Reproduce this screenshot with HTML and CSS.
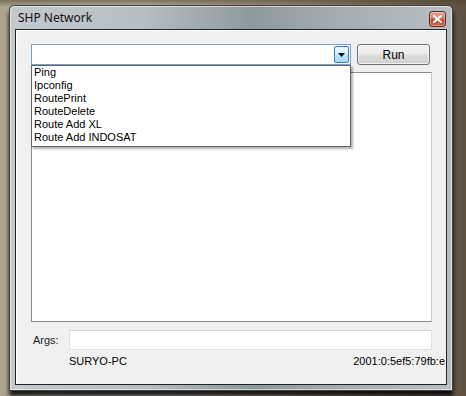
FILE: index.html
```html
<!DOCTYPE html>
<html lang="en">
<head>
    <meta charset="UTF-8">
    <title>SHP Network</title>
    <link rel="stylesheet" href="styles.css">
</head>
<body>
    <div class="window">
        <div class="titlebar">
            <span class="title">SHP Network</span>
            <div class="close-btn">
                <svg width="9" height="8" viewBox="0 0 9 8">
                    <path d="M1 1 L8 7 M8 1 L1 7" stroke="#fff" stroke-width="2.2" stroke-linecap="square"/>
                </svg>
            </div>
        </div>

        <div class="client">
            <div class="command-row">
                <div class="combo">
                    <div class="combo-text"></div>
                    <div class="combo-arrow">
                        <svg width="7" height="4" viewBox="0 0 7 4"><path d="M0 0 H7 L3.5 4 Z" fill="#000"/></svg>
                    </div>
                </div>
                <button class="btn">Run</button>
            </div>

            <div class="output"></div>

            <div class="args-row">
                <label class="args-label">Args:</label>
                <div class="args-input"></div>
            </div>

            <div class="status-row">
                <span>SURYO-PC</span>
                <span class="ip">2001:0:5ef5:79fb:e</span>
            </div>

            <ul class="dropdown">
                <li>Ping</li>
                <li>Ipconfig</li>
                <li>RoutePrint</li>
                <li>RouteDelete</li>
                <li>Route Add XL</li>
                <li>Route Add INDOSAT</li>
            </ul>
        </div>
    </div>
</body>
</html>
```

FILE: styles.css
```css
body {
    margin: 0;
    width: 466px;
    height: 396px;
    overflow: hidden;
    font-family: "Liberation Sans", Arial, sans-serif;
    font-size: 11px;
    color: #000;
    background:
        linear-gradient(180deg, rgba(80, 66, 48, 0.55) 0px, rgba(80, 66, 48, 0) 7px),
        linear-gradient(90deg, #aaa48d 0%, #b4af9a 30%, #978c76 60%, #74664f 85%, #5e5140 100%);
    padding-top: 5px;
    box-sizing: border-box;
}

.window {
    margin-left: 9px;
    width: 444px;
    height: 386px;
    box-sizing: border-box;
    border: 1px solid #3d4347;
    border-radius: 5px 5px 0 0;
    padding: 0 5px 5px 5px;
    display: flex;
    flex-direction: column;
    background: linear-gradient(90deg, #c3c9cc 0%, #b7bec2 30%, #8e989d 55%, #a6adb1 75%, #b9bfc2 100%);
    box-shadow: 0 5px 4px rgba(0, 0, 0, 0.85), inset 0 0 0 1px rgba(255, 255, 255, 0.55);
}

.titlebar {
    height: 23px;
    display: flex;
    align-items: center;
    justify-content: space-between;
    padding-left: 3px;
    margin-right: -5px;
    padding-right: 6px;
}

.title {
    font-family: "Noto Sans", "Open Sans", sans-serif;
    font-size: 12px;
    color: #111;
    margin-top: -1px;
}

.close-btn {
    width: 15px;
    height: 14px;
    margin-top: 2px;
    border: 1px solid #5b2d22;
    border-radius: 3px;
    background: linear-gradient(180deg, #e9a896 0%, #d77a63 45%, #c2432a 55%, #d4673f 100%);
    display: flex;
    align-items: center;
    justify-content: center;
    box-shadow: inset 0 0 0 1px rgba(255, 255, 255, 0.35);
}

.client {
    flex: 1;
    position: relative;
    background: #f0f0f0;
    border: 1px solid #1f2326;
    box-shadow: inset 1px 1px 0 #fff;
    padding: 14px 14px 0 15px;
    display: flex;
    flex-direction: column;
}

.command-row {
    display: flex;
    align-items: flex-start;
}

.combo {
    width: 320px;
    height: 21px;
    box-sizing: border-box;
    border: 1px solid #7d9ec0;
    background: #fff;
    display: flex;
    justify-content: flex-end;
    padding: 1px;
}

.combo-arrow {
    width: 15px;
    box-sizing: border-box;
    border: 1px solid #3c7fb1;
    border-radius: 2px;
    background: linear-gradient(180deg, #eaf6fd 0%, #d9f0fc 45%, #bee6fd 50%, #a7d9f5 100%);
    display: flex;
    align-items: center;
    justify-content: center;
}

.btn {
    margin-left: 6px;
    width: 73px;
    height: 21px;
    padding: 0;
    font-family: "Liberation Sans", Arial, sans-serif;
    font-size: 12px;
    color: #000;
    border: 1px solid #707070;
    border-radius: 3px;
    background: linear-gradient(180deg, #f2f2f2 0%, #ebebeb 48%, #dddddd 52%, #cfcfcf 100%);
    box-shadow: inset 0 0 0 1px rgba(255, 255, 255, 0.7);
}

.output {
    margin-top: 7px;
    height: 250px;
    box-sizing: border-box;
    border: 1px solid #8a8a8a;
    border-right-color: #c6c6c6;
    border-bottom-color: #8a8a8a;
    background: #fff;
}

.args-row {
    margin-top: 8px;
    display: flex;
    align-items: center;
}

.args-label {
    width: 38px;
    padding-left: 2px;
    box-sizing: border-box;
    color: #222;
}

.args-input {
    flex: 1;
    height: 20px;
    box-sizing: border-box;
    border: 1px solid #e0e0e0;
    border-top-color: #d5d5d5;
    background: #fff;
}

.status-row {
    margin-top: 5px;
    margin-right: -13px;
    padding-left: 38px;
    line-height: 13px;
    display: flex;
    justify-content: space-between;
    white-space: nowrap;
    overflow: hidden;
}

.dropdown {
    position: absolute;
    left: 15px;
    top: 35px;
    width: 320px;
    box-sizing: border-box;
    margin: 0;
    padding: 0 0 2px 0;
    list-style: none;
    background: #fff;
    border: 1px solid #646464;
    box-shadow: 2px 2px 2px rgba(0, 0, 0, 0.3);
}

.dropdown li {
    height: 13px;
    line-height: 13px;
    padding-left: 2px;
}
```
